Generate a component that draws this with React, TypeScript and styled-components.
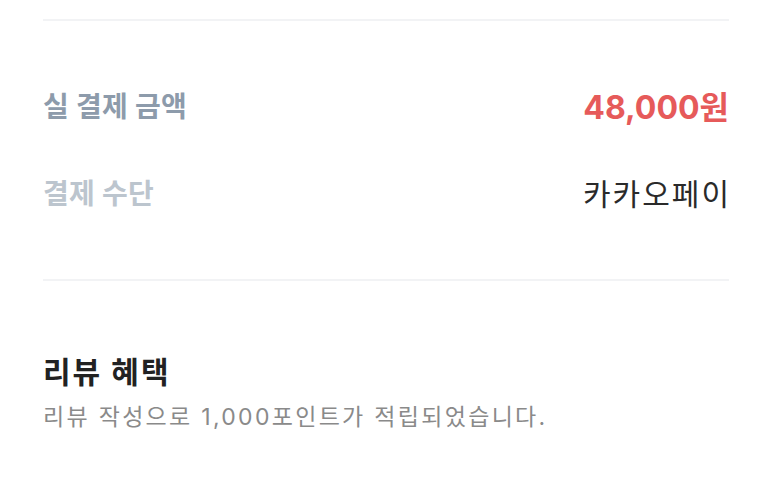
import React from "react";
import styled, { createGlobalStyle } from "styled-components";

const Global = createGlobalStyle`
  html, body { margin: 0; padding: 0; background: #fff; }
  body { font-family: Inter, "Noto Sans CJK KR", "Noto Sans", sans-serif; }
`;

const Page = styled.div`
  padding: 19px 44px 0 43px;
  display: flex;
  flex-direction: column;
`;

const Divider = styled.div`
  height: 2px;
  background: #f2f3f5;
`;

const Section = styled.div`
  display: flex;
  flex-direction: column;
  padding: 64px 0 67px;
  gap: 47px;
`;

const Row = styled.div`
  display: flex;
  justify-content: space-between;
  align-items: center;
  height: 40px;
`;

const Label = styled.span<{ $muted?: boolean }>`
  font-size: 28px;
  font-weight: 700;
  letter-spacing: 0.3px;
  color: ${(p) => (p.$muted ? "#bcc5ce" : "#8d9bab")};
`;

const Amount = styled.span`
  font-size: 32px;
  font-weight: 700;
  color: #e65a5a;
`;

const Value = styled.span`
  font-size: 30px;
  font-weight: 400;
  letter-spacing: 2px;
  margin-right: -2px;
  color: #2a2a2a;
`;

const Benefit = styled.div`
  display: flex;
  flex-direction: column;
  padding-top: 71px;
  gap: 9px;
`;

const Title = styled.div`
  font-size: 30px;
  font-weight: 700;
  letter-spacing: 2px;
  color: #222;
  line-height: 40px;
`;

const Desc = styled.div`
  font-size: 23px;
  letter-spacing: 2.3px;
  color: #8a8a8a;
  line-height: 32px;
`;

export default function App() {
  return (
    <>
      <Global />
      <Page>
        <Divider />
        <Section>
          <Row>
            <Label>실 결제 금액</Label>
            <Amount>48,000원</Amount>
          </Row>
          <Row>
            <Label $muted>결제 수단</Label>
            <Value>카카오페이</Value>
          </Row>
        </Section>
        <Divider />
        <Benefit>
          <Title>리뷰 혜택</Title>
          <Desc>리뷰 작성으로 1,000포인트가 적립되었습니다.</Desc>
        </Benefit>
      </Page>
    </>
  );
}
